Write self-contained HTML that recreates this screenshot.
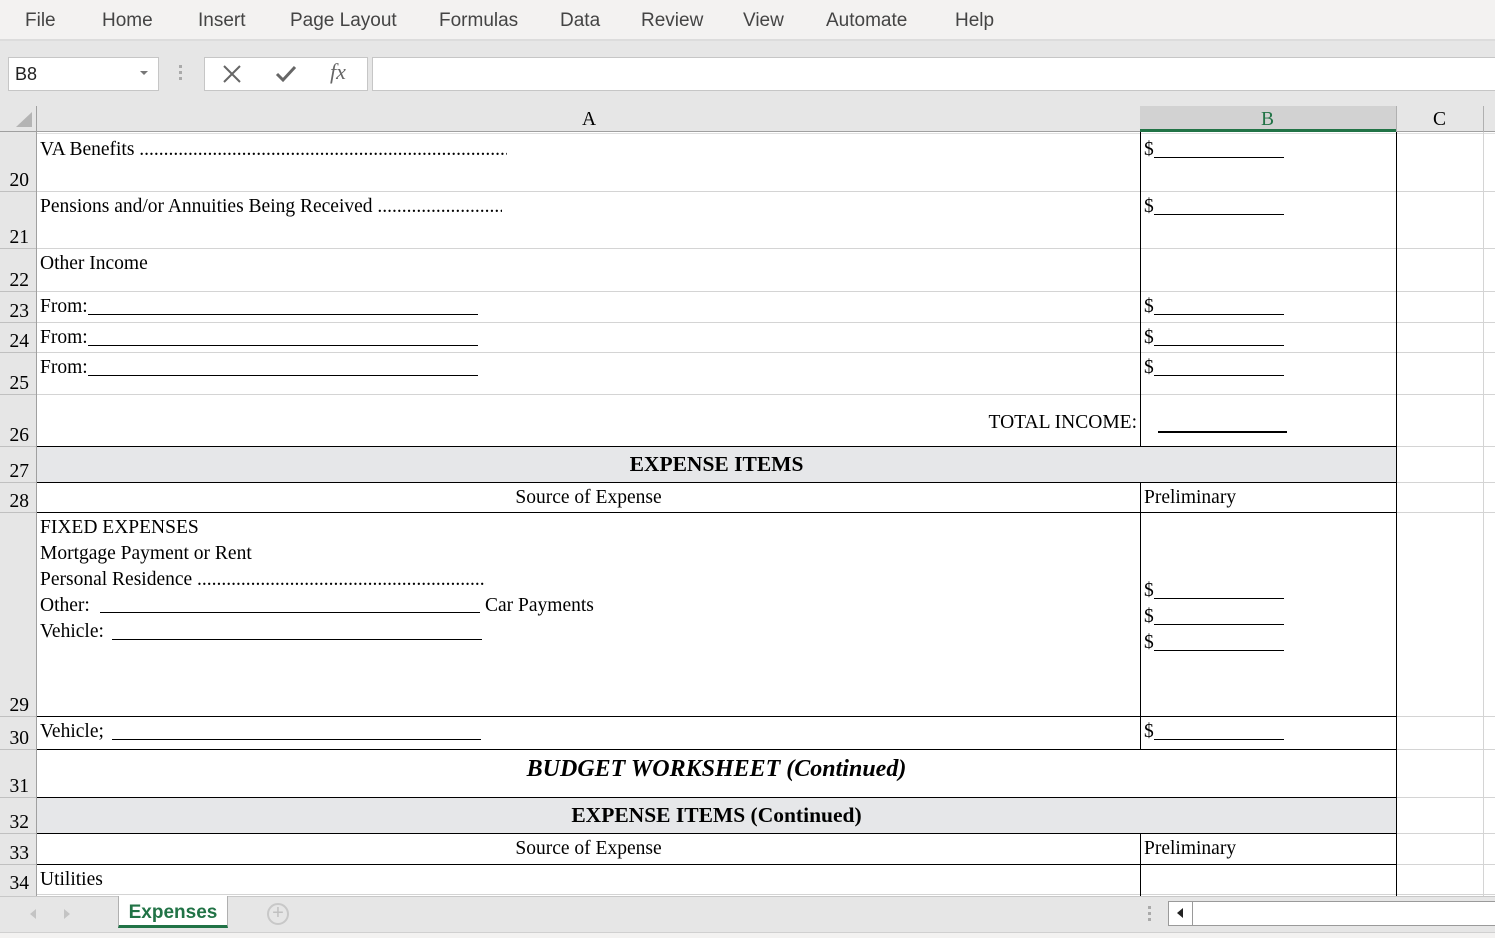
<!DOCTYPE html>
<html><head><meta charset="utf-8"><style>
*{margin:0;padding:0;box-sizing:border-box}
body{width:1495px;height:938px;position:relative;overflow:hidden;background:#fff;font-family:"Liberation Serif",serif;color:#000}
.a{position:absolute}
.ui{font-family:"Liberation Sans",sans-serif}
.t{position:absolute;font-size:19.5px;line-height:22px;height:22px;white-space:nowrap;overflow:hidden;margin-top:2px}
.rn{position:absolute;left:0;width:29px;text-align:right;font-size:19.5px;line-height:22px;margin-top:2px}
.h{position:absolute;height:1px;background:#d4d4d4}
.v{position:absolute;width:1px;background:#d4d4d4}
.k{background:#000}
.ul{position:absolute;height:1px;background:#000}
</style></head><body>
<div class="a" style="left:0;top:0;width:1495px;height:40px;background:#f3f2f1"></div>
<div class="a" style="left:0;top:40px;width:1495px;height:66px;background:#e6e6e6"></div>
<div class="a" style="left:0;top:39px;width:1495px;height:2px;background:#dcdcdc"></div>
<div class="a ui" style="left:0;top:10px;font-size:19px;color:#444;white-space:nowrap">
<span class="a" style="left:25px">File</span><span class="a" style="left:102px">Home</span><span class="a" style="left:198px">Insert</span><span class="a" style="left:290px">Page Layout</span><span class="a" style="left:439px">Formulas</span><span class="a" style="left:560px">Data</span><span class="a" style="left:641px">Review</span><span class="a" style="left:743px">View</span><span class="a" style="left:826px">Automate</span><span class="a" style="left:955px">Help</span></div>
<div class="a ui" style="left:8px;top:57px;width:151px;height:34px;background:#fff;border:1px solid #c6c6c6;font-size:18px;line-height:32px;padding-left:6px;color:#222">B8</div>
<div class="a" style="left:140px;top:71px;border-left:4px solid transparent;border-right:4px solid transparent;border-top:4px solid #777"></div>
<div class="a" style="left:179px;top:65px;width:3px;height:3px;background:#aaa;box-shadow:0 6px 0 #aaa,0 12px 0 #aaa"></div>
<div class="a" style="left:204px;top:57px;width:164px;height:34px;background:#fff;border:1px solid #c6c6c6"></div>
<svg class="a" style="left:222px;top:64px" width="20" height="20"><path d="M2 2L18 18M18 2L2 18" stroke="#666" stroke-width="2"/></svg>
<svg class="a" style="left:275px;top:64px" width="22" height="20"><path d="M2 10L8 16L20 3" stroke="#666" stroke-width="3" fill="none"/></svg>
<div class="a" style="left:330px;top:59px;font-size:22px;font-style:italic;color:#666;font-family:'Liberation Serif',serif">fx</div>
<div class="a" style="left:372px;top:57px;width:1130px;height:34px;background:#fff;border:1px solid #c6c6c6"></div>
<div class="a" style="left:0;top:106px;width:1495px;height:26px;background:#e6e6e6"></div>
<div class="a" style="left:1140px;top:106px;width:256px;height:26px;background:#d2d2d2"></div>
<div class="a" style="left:1140px;top:129px;width:256px;height:3px;background:#217346"></div>
<div class="a" style="left:0;top:131px;width:1140px;height:1px;background:#a0a0a0"></div>
<div class="a" style="left:1396px;top:131px;width:99px;height:1px;background:#a0a0a0"></div>
<svg class="a" style="left:14px;top:110px" width="20" height="18"><path d="M18 2L18 17L2 17Z" fill="#b4b4b4"/></svg>
<div class="a" style="left:36px;top:106px;width:1px;height:790px;background:#a0a0a0"></div>
<div class="v" style="left:1396px;top:106px;height:26px;background:#b0b0b0"></div>
<div class="v" style="left:1483px;top:106px;height:26px;background:#b0b0b0"></div>
<div class="a" style="left:582px;top:109px;font-size:19.5px">A</div>
<div class="a" style="left:1261px;top:109px;font-size:19.5px;color:#217346">B</div>
<div class="a" style="left:1433px;top:109px;font-size:19.5px">C</div>
<div class="a" style="left:0;top:132px;width:36px;height:764px;background:#e6e6e6"></div>
<div class="rn" style="top:168px">20</div><div class="rn" style="top:225px">21</div><div class="rn" style="top:268px">22</div><div class="rn" style="top:299px">23</div><div class="rn" style="top:329px">24</div><div class="rn" style="top:371px">25</div><div class="rn" style="top:423px">26</div><div class="rn" style="top:459px">27</div><div class="rn" style="top:489px">28</div><div class="rn" style="top:693px">29</div><div class="rn" style="top:726px">30</div><div class="rn" style="top:774px">31</div><div class="rn" style="top:810px">32</div><div class="rn" style="top:841px">33</div><div class="rn" style="top:871px">34</div>
<div class="h" style="left:0;top:191px;width:36px;background:#c0c0c0"></div><div class="h" style="left:0;top:248px;width:36px;background:#c0c0c0"></div><div class="h" style="left:0;top:291px;width:36px;background:#c0c0c0"></div><div class="h" style="left:0;top:322px;width:36px;background:#c0c0c0"></div><div class="h" style="left:0;top:352px;width:36px;background:#c0c0c0"></div><div class="h" style="left:0;top:394px;width:36px;background:#c0c0c0"></div><div class="h" style="left:0;top:446px;width:36px;background:#c0c0c0"></div><div class="h" style="left:0;top:482px;width:36px;background:#c0c0c0"></div><div class="h" style="left:0;top:512px;width:36px;background:#c0c0c0"></div><div class="h" style="left:0;top:716px;width:36px;background:#c0c0c0"></div><div class="h" style="left:0;top:749px;width:36px;background:#c0c0c0"></div><div class="h" style="left:0;top:797px;width:36px;background:#c0c0c0"></div><div class="h" style="left:0;top:833px;width:36px;background:#c0c0c0"></div><div class="h" style="left:0;top:864px;width:36px;background:#c0c0c0"></div>
<div class="h" style="left:37px;top:133px;width:1458px;background:#e0e0e0"></div>
<div class="h" style="left:37px;top:191px;width:1458px"></div>
<div class="h" style="left:37px;top:248px;width:1458px"></div>
<div class="h" style="left:37px;top:291px;width:1458px"></div>
<div class="h" style="left:37px;top:322px;width:1458px"></div>
<div class="h" style="left:37px;top:352px;width:1458px"></div>
<div class="h" style="left:37px;top:394px;width:1458px"></div>
<div class="h" style="left:1396px;top:446px;width:99px"></div><div class="h" style="left:1396px;top:482px;width:99px"></div><div class="h" style="left:1396px;top:512px;width:99px"></div><div class="h" style="left:1396px;top:716px;width:99px"></div><div class="h" style="left:1396px;top:749px;width:99px"></div><div class="h" style="left:1396px;top:797px;width:99px"></div><div class="h" style="left:1396px;top:833px;width:99px"></div><div class="h" style="left:1396px;top:864px;width:99px"></div><div class="h" style="left:37px;top:894px;width:1458px"></div>
<div class="v" style="left:1483px;top:132px;height:764px"></div>
<div class="a" style="left:37px;top:446px;width:1359px;height:36px;background:#e6e7e9"></div>
<div class="a" style="left:37px;top:797px;width:1359px;height:36px;background:#e6e7e9"></div>
<div class="v k" style="left:1140px;top:132px;height:314px"></div>
<div class="v k" style="left:1396px;top:132px;height:764px"></div>
<div class="h k" style="left:37px;top:446px;width:1360px"></div>
<div class="h k" style="left:37px;top:482px;width:1360px"></div>
<div class="h k" style="left:37px;top:512px;width:1360px"></div>
<div class="h k" style="left:37px;top:716px;width:1360px"></div>
<div class="h k" style="left:37px;top:749px;width:1360px"></div>
<div class="h k" style="left:37px;top:797px;width:1360px"></div>
<div class="h k" style="left:37px;top:833px;width:1360px"></div>
<div class="h k" style="left:37px;top:864px;width:1360px"></div>
<div class="v k" style="left:1140px;top:482px;height:267px"></div>
<div class="v k" style="left:1140px;top:833px;height:63px"></div>
<div class="t" style="left:40px;top:137px;width:467px">VA Benefits .........................................................................................................</div>
<div class="t" style="left:40px;top:194px;width:462px">Pensions and/or Annuities Being Received ............................................</div>
<div class="t" style="left:40px;top:251px">Other Income</div>
<div class="t" style="left:40px;top:294px">From:</div><div class="ul" style="left:88px;top:314px;width:390px"></div>
<div class="t" style="left:40px;top:325px">From:</div><div class="ul" style="left:88px;top:345px;width:390px"></div>
<div class="t" style="left:40px;top:355px">From:</div><div class="ul" style="left:88px;top:375px;width:390px"></div>
<div class="t" style="left:1144px;top:137px">$</div><div class="ul" style="left:1154px;top:157px;width:130px"></div>
<div class="t" style="left:1144px;top:194px">$</div><div class="ul" style="left:1154px;top:214px;width:130px"></div>
<div class="t" style="left:1144px;top:294px">$</div><div class="ul" style="left:1154px;top:314px;width:130px"></div>
<div class="t" style="left:1144px;top:325px">$</div><div class="ul" style="left:1154px;top:345px;width:130px"></div>
<div class="t" style="left:1144px;top:355px">$</div><div class="ul" style="left:1154px;top:375px;width:130px"></div>
<div class="t" style="left:800px;top:410px;width:337px;text-align:right">TOTAL INCOME:</div>
<div class="ul" style="left:1158px;top:431px;width:129px;height:2px"></div>
<div class="t" style="left:37px;top:450px;width:1359px;text-align:center;font-weight:bold;font-size:21.5px;height:24px;line-height:24px">EXPENSE ITEMS</div>
<div class="t" style="left:37px;top:485px;width:1103px;text-align:center">Source of Expense</div>
<div class="t" style="left:1144px;top:485px">Preliminary</div>
<div class="t" style="left:40px;top:515px">FIXED EXPENSES</div>
<div class="t" style="left:40px;top:541px">Mortgage Payment or Rent</div>
<div class="t" style="left:40px;top:567px;width:446px">Personal Residence .........................................................................................</div>
<div class="t" style="left:40px;top:593px">Other:</div><div class="ul" style="left:100px;top:612px;width:380px"></div><div class="t" style="left:485px;top:593px">Car Payments</div>
<div class="t" style="left:40px;top:619px">Vehicle:</div><div class="ul" style="left:112px;top:639px;width:370px"></div>
<div class="t" style="left:1144px;top:578px">$</div><div class="ul" style="left:1154px;top:598px;width:130px"></div>
<div class="t" style="left:1144px;top:604px">$</div><div class="ul" style="left:1154px;top:624px;width:130px"></div>
<div class="t" style="left:1144px;top:630px">$</div><div class="ul" style="left:1154px;top:650px;width:130px"></div>
<div class="t" style="left:40px;top:719px">Vehicle;</div><div class="ul" style="left:112px;top:739px;width:369px"></div>
<div class="t" style="left:1144px;top:719px">$</div><div class="ul" style="left:1154px;top:739px;width:130px"></div>
<div class="t" style="left:37px;top:753px;width:1359px;text-align:center;font-weight:bold;font-style:italic;font-size:24px;height:28px;line-height:28px">BUDGET WORKSHEET (Continued)</div>
<div class="t" style="left:37px;top:801px;width:1359px;text-align:center;font-weight:bold;font-size:21.5px;height:24px;line-height:24px">EXPENSE ITEMS (Continued)</div>
<div class="t" style="left:37px;top:836px;width:1103px;text-align:center">Source of Expense</div>
<div class="t" style="left:1144px;top:836px">Preliminary</div>
<div class="t" style="left:40px;top:867px">Utilities</div>
<div class="a" style="left:0;top:896px;width:1495px;height:36px;background:#e6e6e6;border-top:1px solid #c8c8c8"></div>
<div class="a" style="left:0;top:932px;width:1495px;height:6px;background:#f3f2f1;border-top:1px solid #d0d0d0"></div>
<div class="a" style="left:30px;top:909px;border-top:5px solid transparent;border-bottom:5px solid transparent;border-right:6px solid #c4c4c4"></div>
<div class="a" style="left:64px;top:909px;border-top:5px solid transparent;border-bottom:5px solid transparent;border-left:6px solid #c4c4c4"></div>
<div class="a ui" style="left:118px;top:896px;width:110px;height:32px;background:#fff;border:1px solid #b0b0b0;border-top:none;border-bottom:3px solid #217346;color:#217346;font-weight:bold;font-size:19px;text-align:center;line-height:34px">Expenses</div>
<div class="a ui" style="left:267px;top:903px;width:22px;height:22px;border:2px solid #c8c8c8;border-radius:50%;color:#c0c0c0;font-size:20px;line-height:17px;text-align:center">+</div>
<div class="a" style="left:1148px;top:906px;width:3px;height:3px;background:#aaa;box-shadow:0 6px 0 #aaa,0 12px 0 #aaa"></div>
<div class="a" style="left:1168px;top:901px;width:330px;height:25px;background:#fff;border:1px solid #9a9a9a"></div>
<div class="a" style="left:1192px;top:901px;width:1px;height:25px;background:#9a9a9a"></div>
<div class="a" style="left:1177px;top:908px;border-top:5px solid transparent;border-bottom:5px solid transparent;border-right:6px solid #222"></div>
</body></html>
